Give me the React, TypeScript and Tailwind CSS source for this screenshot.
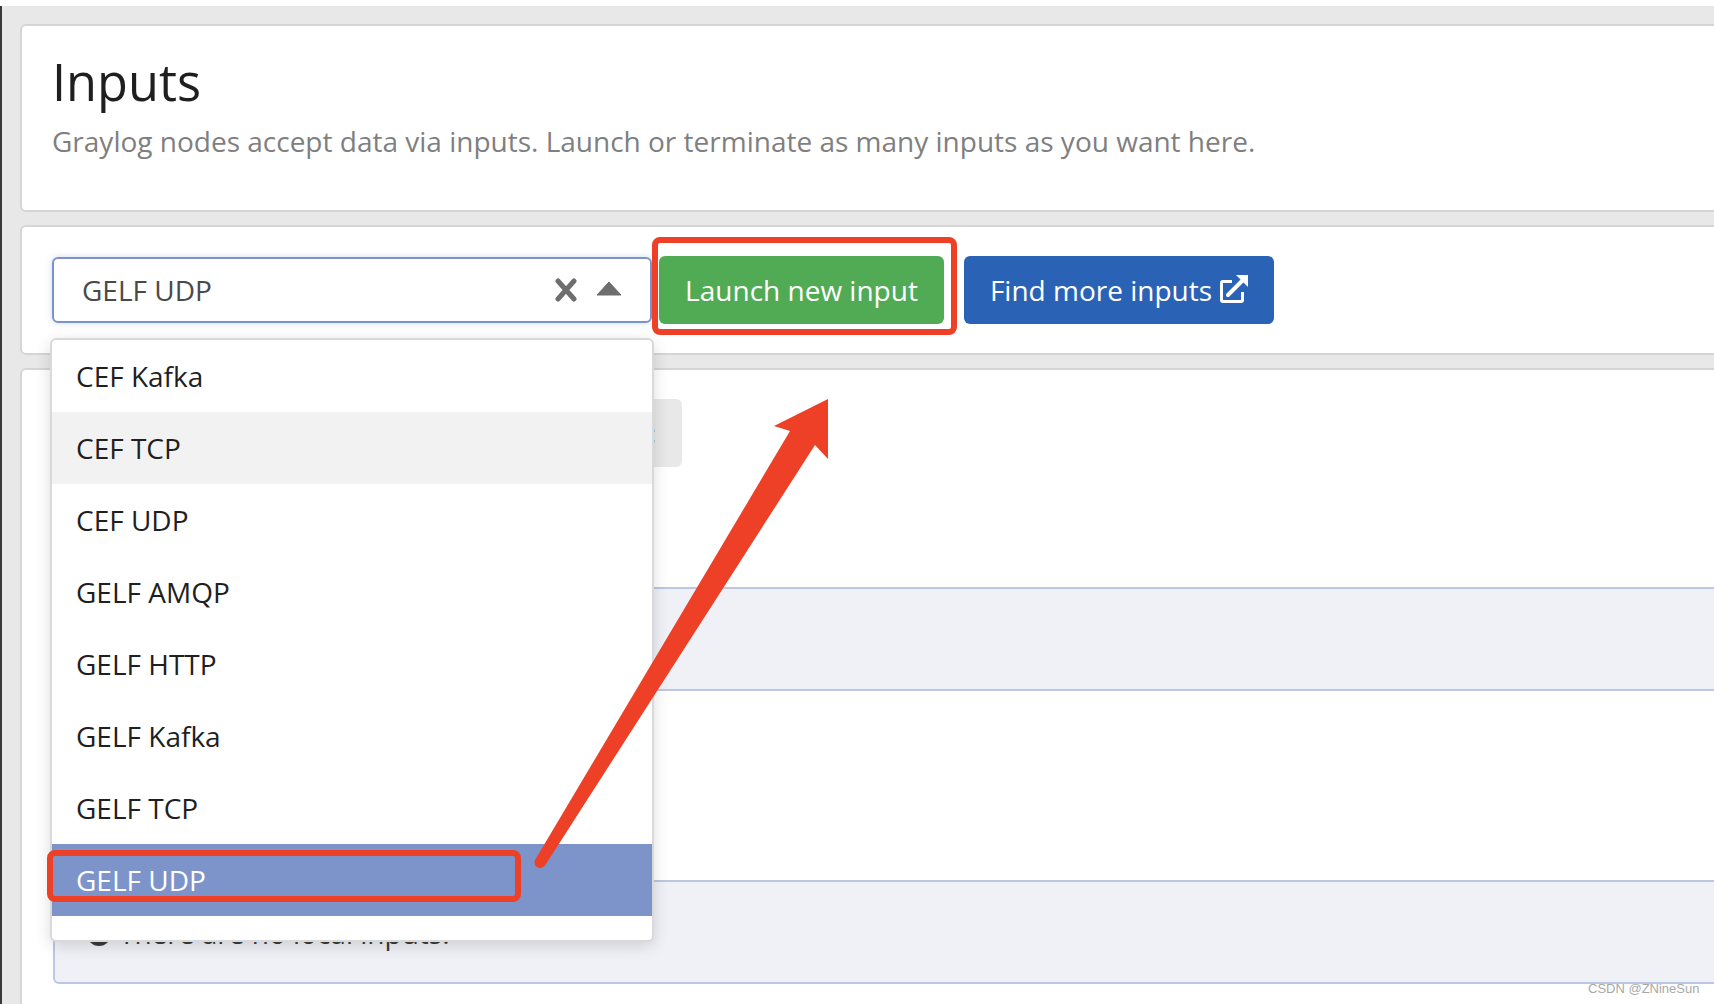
const options = ["CEF Kafka", "CEF TCP", "CEF UDP", "GELF AMQP", "GELF HTTP", "GELF Kafka", "GELF TCP", "GELF UDP"];

export default function App() {
    return (
        <main className="relative w-[1714px] h-[1004px] overflow-hidden bg-white font-['Open_Sans','Noto_Sans',sans-serif]">
            <div className="h-[6px] bg-white" />
            <div className="h-[998px] flex">
                <div className="w-[2px] bg-[#3a3a3a]" />

                {/* Page content */}
                <div className="flex-1 bg-[#e8e8e8] pl-[18px] pt-[18px] flex flex-col gap-[13px] -mr-[20px]">
                    <section className="h-[188px] bg-white border-2 border-[#d5d5d5] rounded-md pl-[30px] pt-[24px]">
                        <h1 className="text-[50.5px] leading-[64px] text-[#1f1f1f]">Inputs</h1>
                        <p className="text-[28px] leading-[44px] text-[#7f7f7f] mt-[5px]">
                            Graylog nodes accept data via inputs. Launch or terminate as many inputs as you want here.
                        </p>
                    </section>

                    <section className="h-[130px] bg-white border-2 border-[#d5d5d5] rounded-md pl-[30px] pt-[30px] flex gap-[8px] items-start">
                        {/* Select */}
                        <div className="w-[600px] h-[66px] border-2 border-[#7b93cc] rounded-md flex items-center pl-[28px] pr-[28px] shadow-[0_0_6px_rgba(123,147,204,0.35)]">
                            <span className="flex-1 text-[28px] text-[#4a4a4a]">GELF UDP</span>
                            <svg width="22" height="24" viewBox="0 0 22 24" className="text-[#6e6e6e] mr-[19px]">
                                <path d="M3 3 L19 21 M19 3 L3 21" stroke="currentColor" strokeWidth="5" strokeLinecap="round" />
                            </svg>
                            <svg width="26" height="15" viewBox="0 0 26 15" className="text-[#6e6e6e] mb-[3px]">
                                <path d="M13 1 L25 14 L1 14 Z" fill="currentColor" stroke="currentColor" strokeLinejoin="round" />
                            </svg>
                        </div>

                        <button className="w-[285px] h-[68px] bg-[#51ab54] rounded-md text-white text-[28px] ml-[-1px] mt-[-1px]">
                            Launch new input
                        </button>
                        <button className="w-[310px] h-[68px] bg-[#2a62b6] rounded-md text-white text-[28px] ml-[12px] mt-[-1px] flex items-center justify-center gap-[8px]">
                            Find more inputs
                            <svg width="28" height="28" viewBox="0 0 28 28" fill="none" className="mt-[-2px]">
                                <path d="M12 6.5 H3 Q1.5 6.5 1.5 8 V25 Q1.5 26.5 3 26.5 H21 Q22.5 26.5 22.5 25 V17" stroke="currentColor" strokeWidth="3" />
                                <path d="M8 20 L23 5" stroke="currentColor" strokeWidth="4" strokeLinecap="round" />
                                <path d="M16 0 H28 V12 Z" fill="currentColor" />
                            </svg>
                        </button>
                    </section>

                    <section className="flex-1 bg-white border-t-2 border-l-2 border-[#d5d5d5] rounded-tl-md pl-[31px] pt-[29px]">
                        <div className="w-[629px] h-[68px] bg-[#e8e8e8] rounded-md flex items-center justify-end pr-[26px] text-[26px] text-[#333333]">:</div>
                        <div className="h-[104px] mt-[120px] bg-[#f0f1f7] border-2 border-[#bcc7e3] rounded-l-md" />
                        <div className="h-[104px] mt-[189px] bg-[#f0f1f7] border-2 border-[#bcc7e3] rounded-l-md flex items-start pl-[32px] pt-[32px] gap-[8px]">
                            <span className="w-[24px] h-[24px] mt-[8px] rounded-full bg-[#3b3b3b]" />
                            <span className="text-[28px] leading-[38px] text-[#3b3b3b]">There are no local inputs.</span>
                        </div>
                    </section>
                </div>
            </div>

            {/* Open dropdown menu */}
            <ul className="absolute left-[50px] top-[338px] w-[604px] h-[604px] bg-white border-2 border-[#d9d9d9] rounded-md shadow-[0_4px_16px_rgba(0,0,0,0.14)] overflow-hidden">
                {options.map((option) => (
                    <li
                        key={option}
                        className={
                            "h-[72px] flex items-center pl-[24px] text-[28px] " +
                            (option === "CEF TCP"
                                ? "bg-[#f2f2f2] text-[#1f1f1f]"
                                : option === "GELF UDP"
                                  ? "bg-[#7d94cb] text-white"
                                  : "text-[#1f1f1f]")
                        }
                    >
                        {option}
                    </li>
                ))}
            </ul>

            {/* Red annotations */}
            <div className="absolute left-[652px] top-[237px] w-[305px] h-[98px] border-[6px] border-[#ee4026] rounded-lg" />
            <div className="absolute left-[47px] top-[850px] w-[474px] h-[52px] border-[6px] border-[#ee4026] rounded-lg" />
            <svg className="absolute left-0 top-0 pointer-events-none" width="1714" height="1004" viewBox="0 0 1714 1004">
                <path
                    d="M828 399 L774 426 L790 431 L535 860 Q533 866 539 868 Q544 868 546 864 L815 445 L828 459 Z"
                    fill="#ee4026"
                />
            </svg>

            <span className="absolute left-[1588px] top-[981px] text-[13px] leading-[16px] text-[#a8a8a8] font-['Liberation_Sans',sans-serif]">
                CSDN @ZNineSun
            </span>
        </main>
    );
}
